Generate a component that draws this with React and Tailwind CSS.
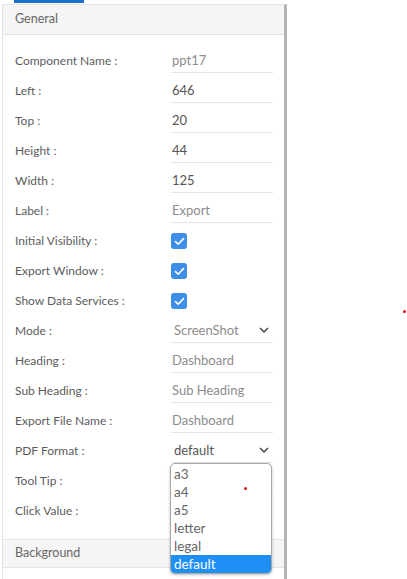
import React from 'react';

const FONT = { fontFamily: 'Lato, "Noto Sans", sans-serif' };

// rows of the General section
const ROWS = [
  { label: 'Component Name :', value: 'ppt17', muted: true },
  { label: 'Left :', value: '646' },
  { label: 'Top :', value: '20' },
  { label: 'Height :', value: '44' },
  { label: 'Width :', value: '125' },
  { label: 'Label :', value: 'Export', muted: true },
  { label: 'Initial Visibility :', check: true },
  { label: 'Export Window :', check: true },
  { label: 'Show Data Services :', check: true },
  { label: 'Mode :', value: 'ScreenShot', select: true, muted: true },
  { label: 'Heading :', value: 'Dashboard', muted: true },
  { label: 'Sub Heading :', value: 'Sub Heading', muted: true },
  { label: 'Export File Name :', value: 'Dashboard', muted: true },
  { label: 'PDF Format :', value: 'default', select: true },
  { label: 'Tool Tip :', value: '' },
  { label: 'Click Value :', value: '' },
];

const OPTIONS = ['a3', 'a4', 'a5', 'letter', 'legal', 'default'];

const Chevron = () => (
  <svg width="10" height="7" viewBox="0 0 10 7" className="shrink-0">
    <path d="M1.5 1.5 L5 5 L8.5 1.5" fill="none" stroke="#555" strokeWidth="1.7" strokeLinecap="round" strokeLinejoin="round" />
  </svg>
);

const Checkbox = () => (
  <div className="w-[16px] h-[16px] rounded-[3px] bg-[#3d8ee6] flex items-center justify-center">
    <svg width="11" height="9" viewBox="0 0 11 9">
      <path d="M1.5 4.6 L4.2 7.2 L9.5 1.6" fill="none" stroke="#fff" strokeWidth="1.6" strokeLinecap="round" strokeLinejoin="round" />
    </svg>
  </div>
);

const Row = ({ row }) => (
  <div className="flex items-center h-[30px] pl-[12px]">
    <div className="w-[156px] text-[12px] text-[#5c5c5c]">{row.label}</div>
    {row.check ? (
      <Checkbox />
    ) : (
      <div className="w-[102px] h-[24px] border-b border-[#e3e3e3] flex items-center justify-between pr-[4px]">
        <span
          className={`text-[13px] ${row.select ? 'pl-[3px]' : 'pl-[1px]'} ${row.muted ? 'text-[#8c8c8c]' : 'text-[#555]'}`}
        >
          {row.value}
        </span>
        {row.select && <Chevron />}
      </div>
    )}
  </div>
);

export default function App() {
  return (
    <div className="relative w-[407px] h-[579px] bg-white overflow-hidden" style={FONT}>
      {/* active tab marker */}
      <div className="ml-[14px] w-[70px] h-[3px] bg-[#1a73c8]" />

      <div className="ml-[2px] mt-[1px] w-[285px] h-[600px] border-l border-[#e2e2e2] border-r-[3px] border-r-[#b4b4b4] border-t border-t-[#e6e6e6]">
        {/* General header */}
        <div className="h-[30px] bg-[#f5f5f5] border-b border-[#e4e4e4] flex items-center pl-[12px] text-[12.5px] text-[#666]">
          General
        </div>

        <div className="pt-[11px] pb-[13px]">
          {ROWS.map((r) => (
            <Row key={r.label} row={r} />
          ))}
        </div>

        {/* Background header */}
        <div className="h-[29px] bg-[#f5f5f5] border-t border-b border-[#e4e4e4] flex items-center pl-[12px] text-[12.5px] text-[#666]">
          Background
        </div>
      </div>

      {/* open PDF format list */}
      <div className="absolute left-[170px] top-[463px] w-[102px] bg-white border border-[#a8a8a8] rounded-[5px] shadow-[0_1px_3px_rgba(0,0,0,0.25)] overflow-hidden pt-[1px]">
        {OPTIONS.map((o) => (
          <div
            key={o}
            className={`h-[18px] flex items-center pl-[3px] text-[13.5px] ${o === 'default' ? 'bg-[#1f8ff5] text-white' : 'text-[#666]'}`}
          >
            {o}
          </div>
        ))}
      </div>

      {/* stray cursor dots */}
      <div className="absolute left-[244px] top-[487px] w-[3px] h-[3px] rounded-full bg-[#e01010]" />
      <div className="absolute left-[403px] top-[310px] w-[3px] h-[3px] rounded-full bg-[#e01010]" />
    </div>
  );
}
